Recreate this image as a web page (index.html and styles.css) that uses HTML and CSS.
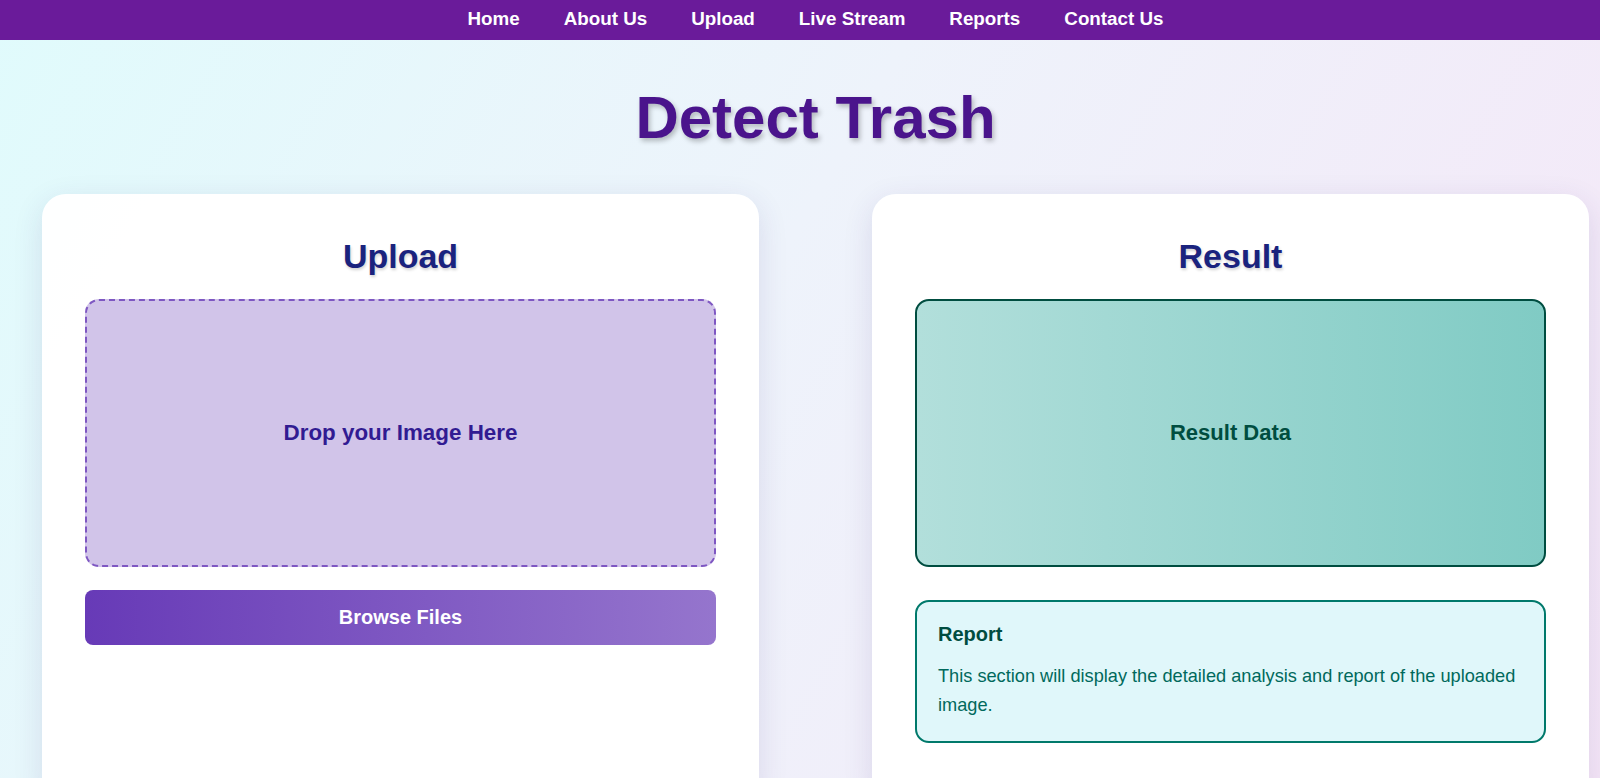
FILE: index.html
```html
<!DOCTYPE html>
<html lang="en">
<head>
<meta charset="utf-8">
<title>Detect Trash</title>
<link rel="stylesheet" href="styles.css">
</head>
<body>
<nav class="topnav">
  <ul class="nav-list">
    <li><a href="#">Home</a></li>
    <li><a href="#">About Us</a></li>
    <li><a href="#">Upload</a></li>
    <li><a href="#">Live Stream</a></li>
    <li><a href="#">Reports</a></li>
    <li><a href="#">Contact Us</a></li>
  </ul>
</nav>
<div class="page">
  <h1 class="title">Detect Trash</h1>
  <main class="panels">
    <section class="card">
      <h2 class="card-title">Upload</h2>
      <div class="dropzone">Drop your Image Here</div>
      <button class="browse">Browse Files</button>
    </section>
    <section class="card">
      <h2 class="card-title">Result</h2>
      <div class="result-box">Result Data</div>
      <div class="report">
        <h3 class="report-title">Report</h3>
        <p class="report-text">This section will display the detailed analysis and report of the uploaded image.</p>
      </div>
    </section>
  </main>
</div>
</body>
</html>
```

FILE: styles.css
```css
* { box-sizing: border-box; }

html, body {
  margin: 0;
  padding: 0;
}

body {
  font-family: "Liberation Sans", Arial, sans-serif;
  background: linear-gradient(120deg, #e0fbfc 0%, #eef3fb 45%, #f5e6f7 100%);
  min-height: 100vh;
  overflow: hidden;
}

.topnav {
  background: #6a1b9a;
  height: 40px;
}

.nav-list {
  list-style: none;
  margin: 0;
  padding: 0 0 2px 31px;
  height: 40px;
  display: flex;
  justify-content: center;
  align-items: center;
}

.nav-list a {
  display: block;
  color: #ffffff;
  text-decoration: none;
  font-weight: bold;
  font-size: 18.8px;
  padding: 0 22px;
  line-height: 34px;
}

.page {
  padding: 0 11px 0 42px;
}

.title {
  margin: 43px 0 42px;
  text-align: center;
  font-size: 60px;
  font-weight: bold;
  color: #4a148c;
  text-shadow: 2px 3px 5px rgba(0, 0, 0, 0.25);
  line-height: 69px;
}

.panels {
  display: grid;
  grid-template-columns: 1fr 1fr;
  column-gap: 113px;
}

.card {
  background: rgba(255, 255, 255, 0.97);
  border-radius: 24px;
  padding: 43px 43px 60px;
  box-shadow: 0 8px 30px rgba(60, 40, 120, 0.12);
  display: flex;
  flex-direction: column;
}

.card-title {
  margin: 0 0 23px;
  text-align: center;
  font-size: 34px;
  line-height: 39px;
  color: #1a237e;
  text-shadow: 1px 2px 3px rgba(0, 0, 0, 0.18);
}

.dropzone {
  height: 268px;
  border: 2px dashed #7e57c2;
  border-radius: 14px;
  background: #d1c4e9;
  display: flex;
  align-items: center;
  justify-content: center;
  font-size: 22.4px;
  font-weight: bold;
  color: #311b92;
}

.browse {
  margin-top: 23px;
  height: 55px;
  border: none;
  border-radius: 8px;
  background: linear-gradient(90deg, #673ab7 0%, #9575cd 100%);
  color: #ffffff;
  font-family: "Liberation Sans", Arial, sans-serif;
  font-size: 20px;
  font-weight: bold;
  cursor: pointer;
}

.result-box {
  height: 268px;
  border: 2px solid #004d40;
  border-radius: 14px;
  background: linear-gradient(90deg, #b2dfdb 0%, #80cbc4 100%);
  display: flex;
  align-items: center;
  justify-content: center;
  font-size: 22px;
  font-weight: bold;
  color: #004d40;
}

.report {
  margin-top: 33px;
  border: 2px solid #00796b;
  border-radius: 14px;
  background: #e0f7fa;
  padding: 21px 21px 21px;
}

.report-title {
  margin: 0 0 16px;
  font-size: 20px;
  line-height: 23px;
  color: #004d40;
}

.report-text {
  margin: 0;
  font-size: 18.2px;
  line-height: 28.8px;
  color: #00695c;
}
```
